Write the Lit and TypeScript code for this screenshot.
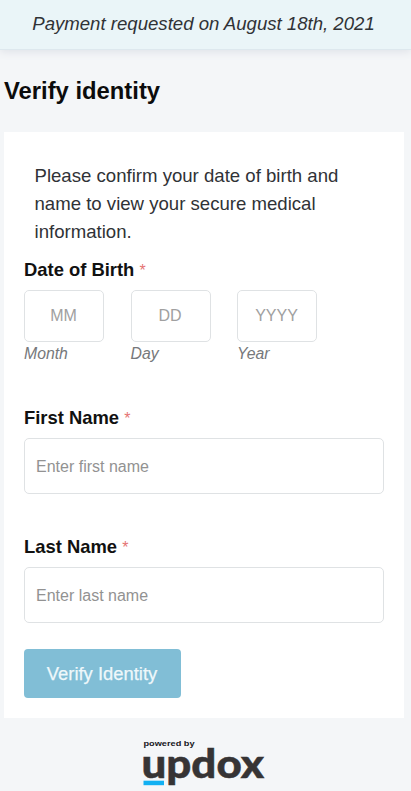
import { LitElement, html, css } from "lit";
import { customElement, property } from "lit/decorators.js";

@customElement("name-field")
class NameField extends LitElement {
  @property() label = "";
  @property() hint = "";

  static styles = css`
    :host { display: block; }
    .label { display: block; font-weight: bold; font-size: 18.4px; line-height: 24px; color: #111; }
    .star { color: #e57373; font-weight: normal; font-size: 16px; }
    input {
      display: block; box-sizing: border-box; width: 100%; height: 55.3px; margin: 7px 0 0;
      padding: 2px 11px 0; border: 1.5px solid #dfe2e4; border-radius: 5px;
      background: #fff; font: 16px "Liberation Sans", Arial, sans-serif; outline: none;
    }
    input::placeholder { color: #929292; opacity: 1; }
  `;

  render() {
    return html`
      <label class="label">${this.label} <span class="star">*</span></label>
      <input placeholder=${this.hint} />
    `;
  }
}

@customElement("app-root")
class AppRoot extends LitElement {
  static styles = css`
    :host {
      display: flex; flex-direction: column; box-sizing: border-box; width: 100%; height: 791px;
      overflow: hidden; background: #f4f6f8; color: #303236;
      font: 18.6px/28px "Liberation Sans", Arial, sans-serif;
    }
    .banner {
      flex: none; box-sizing: border-box; height: 50px; padding-top: 10px; padding-right: 4px;
      text-align: center; font-style: italic; font-size: 18.6px; white-space: nowrap;
      background: #eaf5f8; border-bottom: 1px solid #dde8ee; box-shadow: 0 2px 8px #dfe2e8;
    }
    h1 { flex: none; margin: 26px 0 0 4px; font-size: 23.8px; line-height: 30px; color: #0c0c0c; }
    .card {
      flex: none; box-sizing: border-box; height: 586px; margin: 26px 7px 0 4px;
      padding: 30px 20px 0; background: #fff;
    }
    p { margin: 0 20px 0 10.5px; }
    .label { font-weight: bold; font-size: 18.4px; line-height: 24px; color: #111; margin-top: 12px; }
    .star { color: #e57373; font-weight: normal; font-size: 16px; }
    .dates { display: flex; gap: 26.5px; margin-top: 7px; }
    .part { width: 80px; font-style: italic; font-size: 15.8px; line-height: 20px; color: #76787b; }
    .part input {
      display: block; box-sizing: border-box; width: 100%; height: 52px; margin: 0 0 2px;
      padding: 0 1px 0 0; border: 1.5px solid #dfe2e4; border-radius: 5px; text-align: center;
      background: #fff; font: 16px "Liberation Sans", Arial, sans-serif; outline: none;
    }
    .part input::placeholder { color: #a0a0a0; opacity: 1; }
    name-field { margin-top: 42.4px; }
    name-field + name-field { margin-top: 41.6px; }
    button {
      display: block; box-sizing: border-box; width: 157px; height: 49px; margin-top: 26.8px; padding: 0 1px 0 0;
      border: 0; border-radius: 4px; background: #81bed6; color: #eff8fb;
      font: 18.4px "Liberation Sans", Arial, sans-serif; -webkit-text-stroke: 0.25px #eff8fb;
    }
    .logo { display: block; flex: none; width: 124px; height: 54px; margin: 19px 0 0 142px; }
    .powered { font: bold 8px "Liberation Sans", Arial, sans-serif; fill: #151520; }
    .brand { font: 900 40px Lato, sans-serif; fill: #363435; stroke: #363435; stroke-width: 0.5px; }
    .underline { fill: #12b0f2; }
  `;

  render() {
    const parts = [["MM", "Month"], ["DD", "Day"], ["YYYY", "Year"]];
    return html`
      <div class="banner">Payment requested on August 18th, 2021</div>
      <h1>Verify identity</h1>
      <div class="card">
        <p>Please confirm your date of birth and name to view your secure medical information.</p>
        <div class="label">Date of Birth <span class="star">*</span></div>
        <div class="dates">
          ${parts.map(([hint, name]) => html`<label class="part"><input placeholder=${hint} />${name}</label>`)}
        </div>
        <name-field label="First Name" hint="Enter first name"></name-field>
        <name-field label="Last Name" hint="Enter last name"></name-field>
        <button>Verify Identity</button>
      </div>
      <svg class="logo" viewBox="0 0 124 54">
        <text class="powered" x="1.5" y="8.5" textLength="51" lengthAdjust="spacingAndGlyphs">powered by</text>
        <text class="brand" x="-0.5" y="40.5" textLength="122.5" lengthAdjust="spacingAndGlyphs">updox</text>
        <rect class="underline" x="1.5" y="43.7" width="20.5" height="4.5" />
      </svg>
    `;
  }
}
